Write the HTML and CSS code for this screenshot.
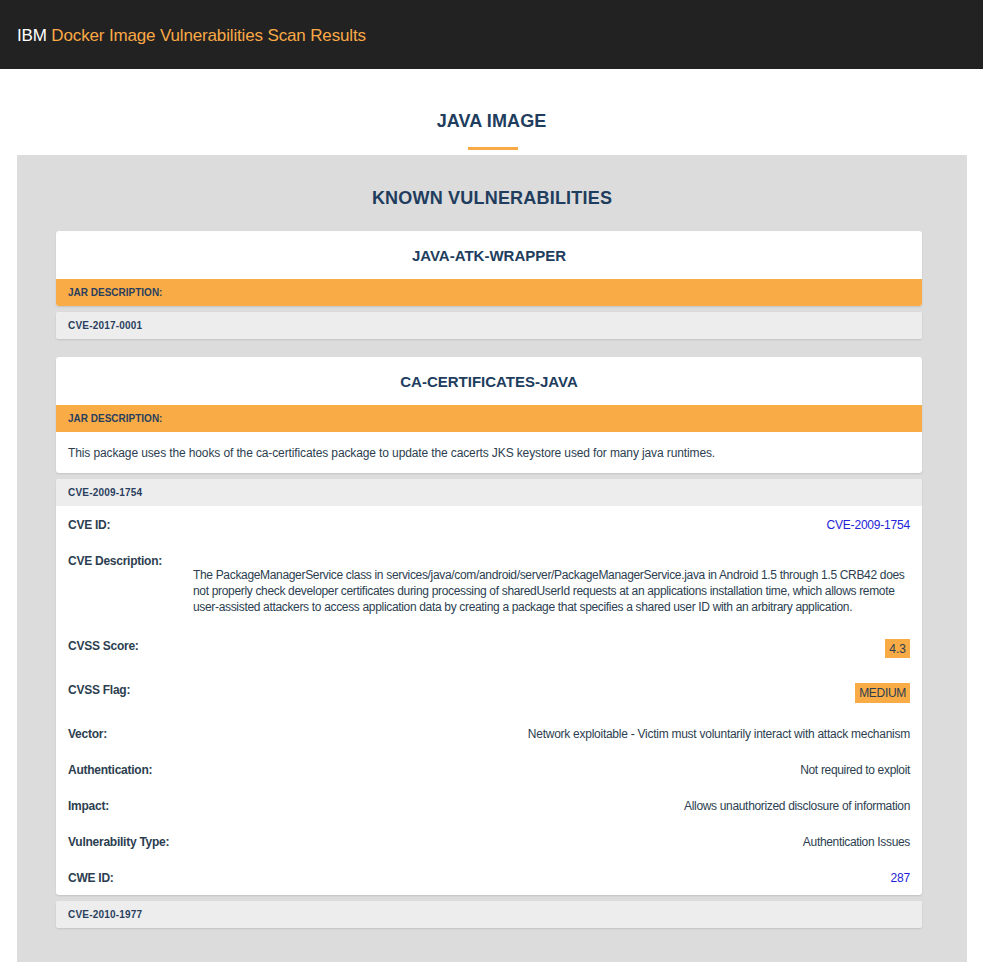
FILE: index.html
```html
<!DOCTYPE html>
<html lang="en">
<head>
<meta charset="utf-8">
<title>IBM Docker Image Vulnerabilities Scan Results</title>
<link rel="stylesheet" href="styles.css">
</head>
<body>
<header class="topbar"><span class="brand">IBM</span>&nbsp;<span class="app">Docker Image Vulnerabilities Scan Results</span></header>

<h1 class="page-title">JAVA IMAGE</h1>
<div class="title-rule"></div>

<section class="known">
  <h2 class="known-title">KNOWN VULNERABILITIES</h2>

  <div class="jar-group">
    <div class="card jar">
      <div class="jar-title">JAVA-ATK-WRAPPER</div>
      <div class="jar-label">JAR DESCRIPTION:</div>
    </div>
    <div class="card cve">
      <div class="cve-head">CVE-2017-0001</div>
    </div>
  </div>

  <div class="jar-group">
    <div class="card jar">
      <div class="jar-title">CA-CERTIFICATES-JAVA</div>
      <div class="jar-label">JAR DESCRIPTION:</div>
      <div class="jar-desc">This package uses the hooks of the ca-certificates package to update the cacerts JKS keystore used for many java runtimes.</div>
    </div>
    <div class="card cve">
      <div class="cve-head">CVE-2009-1754</div>
      <div class="cve-body">
        <div class="row"><span class="label">CVE ID:</span><a class="link" href="#">CVE-2009-1754</a></div>
        <div class="row row-desc"><span class="label">CVE Description:</span><p class="desc">The PackageManagerService class in services/java/com/android/server/PackageManagerService.java in Android 1.5 through 1.5 CRB42 does not properly check developer certificates during processing of sharedUserId requests at an applications installation time, which allows remote user-assisted attackers to access application data by creating a package that specifies a shared user ID with an arbitrary application.</p></div>
        <div class="row row-badge"><span class="label">CVSS Score:</span><span class="badge">4.3</span></div>
        <div class="row row-badge"><span class="label">CVSS Flag:</span><span class="badge badge-flag">MEDIUM</span></div>
        <div class="row"><span class="label">Vector:</span><span class="value value-wide">Network exploitable - Victim must voluntarily interact with attack mechanism</span></div>
        <div class="row"><span class="label">Authentication:</span><span class="value">Not required to exploit</span></div>
        <div class="row"><span class="label">Impact:</span><span class="value">Allows unauthorized disclosure of information</span></div>
        <div class="row"><span class="label">Vulnerability Type:</span><span class="value">Authentication Issues</span></div>
        <div class="row"><span class="label">CWE ID:</span><a class="link" href="#">287</a></div>
      </div>
    </div>
    <div class="card cve">
      <div class="cve-head">CVE-2010-1977</div>
    </div>
  </div>
</section>
</body>
</html>
```

FILE: styles.css
```css
* { box-sizing: border-box; }

body {
  margin: 0;
  font-family: "Liberation Sans", Arial, sans-serif;
  color: #2c3e50;
  background: #ffffff;
}

.topbar {
  height: 69px;
  background: #222222;
  display: flex;
  align-items: center;
  padding: 2px 0 0 17px;
  font-size: 17px;
  letter-spacing: -0.15px;
}
.brand { color: #ffffff; }
.app { color: #f9a946; }

.page-title {
  margin: 42px 0 0;
  font-size: 18px;
  line-height: 20px;
  font-weight: bold;
  text-align: center;
  color: #213d5e;
  letter-spacing: 0.1px;
}
.title-rule {
  width: 50px;
  height: 3px;
  background: #f9a946;
  margin: 16px auto 5px;
  position: relative;
  left: 1px;
}

.known {
  background: #dcdcdc;
  margin: 0 16px 0 17px;
  padding: 32px 45px 34px 39px;
}
.known-title {
  margin: 0 -45px 22px -39px;
  font-size: 18px;
  line-height: 22px;
  font-weight: bold;
  text-align: center;
  color: #213d5e;
  letter-spacing: 0.2px;
}

.jar-group {
  display: flex;
  flex-direction: column;
  gap: 6px;
  margin-bottom: 18px;
}
.jar-group:last-child { margin-bottom: 0; }

.card {
  background: #ffffff;
  border-radius: 3px;
  overflow: hidden;
  box-shadow: 0 1px 2px rgba(0, 0, 0, 0.12);
}

.jar-title {
  font-size: 15px;
  line-height: 18px;
  font-weight: bold;
  text-align: center;
  padding: 16px 0 14px;
  color: #213d5e;
}
.jar-label {
  background: #f9ac46;
  font-size: 10px;
  line-height: 13px;
  font-weight: bold;
  padding: 7px 12px;
  color: #2a3f5e;
}
.jar-desc {
  font-size: 12px;
  line-height: 16px;
  padding: 13px 12px 12px;
  letter-spacing: -0.12px;
}

.cve-head {
  background: #ededed;
  font-size: 10px;
  line-height: 13px;
  font-weight: bold;
  padding: 7px 12px;
  color: #2a3f5e;
  letter-spacing: 0.2px;
}
.cve-body {
  padding: 1px 12px 0;
}

.row {
  display: flex;
  justify-content: space-between;
  align-items: flex-start;
  padding: 10px 0;
  font-size: 12px;
  line-height: 16px;
  letter-spacing: -0.33px;
}
.row:last-child { padding-bottom: 9px; }
.label {
  font-weight: bold;
  color: #2c3e50;
  letter-spacing: -0.25px;
}
.value { text-align: right; }
.value-wide { letter-spacing: -0.26px; }
.link {
  color: #2323d6;
  text-decoration: none;
  letter-spacing: -0.2px;
}

.row-desc {
  display: grid;
  grid-template-columns: 125px 1fr;
}
.desc {
  margin: 14px 0 3px;
}

.row-badge {
  min-height: 44px;
}
.badge {
  background: #f9ac46;
  margin-top: 1px;
  padding: 2px 4px 1px;
  line-height: 16px;
  font-size: 12px;
  color: #2c3e50;
  letter-spacing: 0;
}
.badge-flag {
  margin-top: 1px;
  padding: 2px 4px 2px 4px;
  letter-spacing: -0.3px;
}
```
